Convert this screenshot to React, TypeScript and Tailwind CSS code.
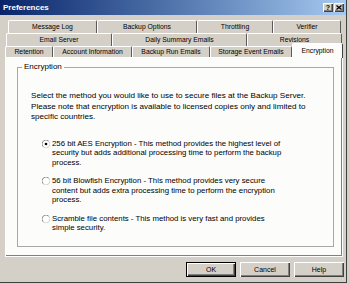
import React from "react";

interface ITab {
  label: string;
  w: string;
  selected?: boolean;
}

const rows: { ml: string; h: string; tabs: ITab[] }[] = [
  {
    ml: "ml-[8px]",
    h: "h-[13px]",
    tabs: [
      { label: "Message Log", w: "w-[89px]" },
      { label: "Backup Options", w: "w-[100px]" },
      { label: "Throttling", w: "w-[76px]" },
      { label: "Verifier", w: "w-[68px]" },
    ],
  },
  {
    ml: "ml-[6px]",
    h: "h-[13px]",
    tabs: [
      { label: "Email Server", w: "w-[106px]" },
      { label: "Daily Summary Emails", w: "w-[135px]" },
      { label: "Revisions", w: "w-[95px]" },
    ],
  },
  {
    ml: "ml-[5px]",
    h: "h-[11px]",
    tabs: [
      { label: "Retention", w: "w-[48px]" },
      { label: "Account Information", w: "w-[79px]" },
      { label: "Backup Run Emails", w: "w-[78px]" },
      { label: "Storage Event Emails", w: "w-[82px]" },
      { label: "Encryption", w: "w-[51px]", selected: true },
    ],
  },
];

const bevel =
  "shadow-[inset_1px_1px_0_#ffffff,inset_-1px_-1px_0_#404040,inset_-2px_-2px_0_#808080]";

const Radio = ({ checked }: { checked?: boolean }) => (
  <svg width="8" height="8" viewBox="0 0 12 12" className="mt-[1px] -ml-[1px] shrink-0">
    <circle cx="6" cy="6" r="5.5" fill="#ffffff" />
    <path d="M1.8 10.2 A5.5 5.5 0 0 1 10.2 1.8" fill="none" stroke="#6e6e6e" strokeWidth="1.2" />
    <path d="M10.2 1.8 A5.5 5.5 0 0 1 1.8 10.2" fill="none" stroke="#c8c4bc" strokeWidth="1.2" />
    {checked && <circle cx="6" cy="6" r="2" fill="#000000" />}
  </svg>
);

const options = [
  {
    checked: true,
    lines: [
      "256 bit AES Encryption - This method provides the highest level of",
      "security but adds additional processing time to perform the backup",
      "process.",
    ],
  },
  {
    lines: [
      "56 bit Blowfish Encryption - This method provides very secure",
      "content but adds extra processing time to perform the encryption",
      "process.",
    ],
  },
  {
    lines: [
      "Scramble file contents - This method is very fast and provides",
      "simple security.",
    ],
  },
];

const Tab = ({ tab, h }: { tab: ITab; h: string }) => {
  if (tab.selected) {
    return (
      <div
        className={`${tab.w} h-[15px] -mt-[3px] relative z-10 bg-[#fcfcfb] border-t border-l border-white border-r border-r-[#404040] rounded-t-[2px] flex items-center justify-center text-[6.8px] leading-none`}
      >
        {tab.label}
      </div>
    );
  }
  return (
    <div
      className={`${tab.w} ${h} bg-[#d4d0c8] border-t border-l border-white border-r border-r-[#5a5a5a] rounded-t-[2px] flex items-center justify-center text-[6.8px] leading-none whitespace-nowrap`}
    >
      {tab.label}
    </div>
  );
};

const App = () => {
  return (
    <div className="w-[350px] h-[284px] bg-[#d4d0c8] font-['Liberation_Sans',Arial,sans-serif] text-black">
      <div className="w-[347px] h-[283px] border-r border-b border-[#404040] flex flex-col">
        <div className="h-[15px] bg-linear-to-r from-[#0a246a] to-[#a6caf0] flex items-center justify-between">
          <span className="pl-[3px] text-white font-bold text-[8px] leading-none">Preferences</span>
          <div className="flex gap-[1px] mr-[2px]">
            <div className={`w-[10px] h-[9px] bg-[#d4d0c8] ${bevel} flex items-center justify-center text-[7px] font-bold leading-none`}>
              ?
            </div>
            <div className={`w-[10px] h-[9px] bg-[#d4d0c8] ${bevel} flex items-center justify-center`}>
              <svg width="6" height="5" viewBox="0 0 6 5">
                <path d="M0.5 0.5 L5.5 4.5 M5.5 0.5 L0.5 4.5" stroke="#000" strokeWidth="1.3" />
              </svg>
            </div>
          </div>
        </div>

        <div className="mt-[5px] flex flex-col">
          {rows.map((row, i) => (
            <div key={i} className={`flex items-start ${row.ml} ${row.h}`}>
              {row.tabs.map((tab) => (
                <Tab key={tab.label} tab={tab} h={row.h} />
              ))}
            </div>
          ))}
        </div>

        <div className="ml-[5px] w-[338px] h-[200px] bg-[#fcfcfb] border-t border-l border-white border-r border-b border-[#404040] shadow-[inset_-1px_-1px_0_#808080] pt-[4px] pb-[9px] pl-[11px] pr-[8px] flex flex-col">
          <fieldset className="flex-1 border border-[#a8a8a8] pl-[4px]">
            <legend className="px-[2px] text-[8px] leading-[10px]">Encryption</legend>
            <div className="ml-[9px] mt-[19px] text-[8.1px] leading-[10.5px] whitespace-nowrap">
              Select the method you would like to use to secure files at the Backup Server.
              <br />
              Please note that encryption is available to licensed copies only and limited to
              <br />
              specific countries.
            </div>
            <div className="ml-[21px] mt-[16px] flex flex-col gap-[9px]">
              {options.map((opt, i) => (
                <div key={i} className="flex items-start gap-[2px]">
                  <Radio checked={opt.checked} />
                  <div className="text-[7.8px] leading-[9.5px] whitespace-nowrap">
                    {opt.lines.map((l, j) => (
                      <div key={j}>{l}</div>
                    ))}
                  </div>
                </div>
              ))}
            </div>
          </fieldset>
        </div>

        <div className="mt-[5px] flex justify-end gap-[4px] pr-[2px]">
          <div className={`w-[50px] h-[15px] border border-black ${bevel} flex items-center justify-center text-[7px] leading-none`}>
            OK
          </div>
          <div className={`w-[50px] h-[15px] ${bevel} flex items-center justify-center text-[7px] leading-none`}>
            Cancel
          </div>
          <div className={`w-[50px] h-[15px] ${bevel} flex items-center justify-center text-[7px] leading-none`}>
            Help
          </div>
        </div>
      </div>
    </div>
  );
};

export default App;
